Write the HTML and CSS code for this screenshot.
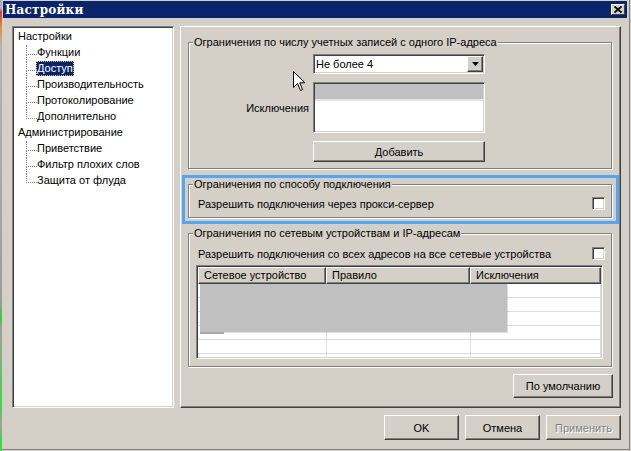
FILE: index.html
```html
<!DOCTYPE html>
<html lang="ru">

<head>
    <meta charset="UTF-8">
    <meta name="viewport" content="width=device-width, initial-scale=1.0">
    <title>Настройки</title>
    <link rel="stylesheet" href="styles.css">
</head>

<body>
    <div class="window">
        <div class="title-bar">
            <span class="title">Настройки</span>
            <span class="close-btn">
                <svg width="8" height="7" viewBox="0 0 8 7">
                    <path d="M0.5 0.5 L7.5 6.5 M7.5 0.5 L0.5 6.5" stroke="#000" stroke-width="1.8" />
                </svg>
            </span>
        </div>
        <div class="dlg-body">
            <div class="dlg-content">
                <div class="tree">
                    <ul class="tree-root">
                        <li>
                            <span class="node">Настройки</span>
                            <ul class="tree-children">
                                <li><span class="node">Функции</span></li>
                                <li><span class="node selected">Доступ</span></li>
                                <li><span class="node">Производительность</span></li>
                                <li><span class="node">Протоколирование</span></li>
                                <li><span class="node">Дополнительно</span></li>
                            </ul>
                        </li>
                        <li>
                            <span class="node">Администрирование</span>
                            <ul class="tree-children">
                                <li><span class="node">Приветствие</span></li>
                                <li><span class="node">Фильтр плохих слов</span></li>
                                <li><span class="node">Защита от флуда</span></li>
                            </ul>
                        </li>
                    </ul>
                </div>
                <div class="panel">
                    <fieldset class="group group-ip">
                        <legend>Ограничения по числу учетных записей с одного IP-адреса</legend>
                        <div class="ip-grid">
                            <span></span>
                            <div class="combo">
                                <span class="combo-text">Не более 4</span>
                                <span class="combo-btn">
                                    <svg width="7" height="4" viewBox="0 0 7 4">
                                        <polygon points="0,0 7,0 3.5,4" fill="#000" />
                                    </svg>
                                </span>
                            </div>
                            <span class="ip-label">Исключения</span>
                            <div class="listbox">
                                <div class="list-sel"></div>
                            </div>
                            <span></span>
                            <button class="btn btn-add">Добавить</button>
                        </div>
                        <svg class="cursor" width="13" height="21" viewBox="0 0 13 21">
                            <path d="M0.5 0.5 V16.5 L4.5 12.5 L7.5 19.5 L9.5 18.5 L6.8 11.8 H12 Z" fill="#fff" stroke="#000" stroke-width="1" />
                        </svg>
                    </fieldset>
                    <div class="highlight">
                        <fieldset class="group group-proxy">
                            <legend>Ограничения по способу подключения</legend>
                            <div class="check-row">
                                <span>Разрешить подключения через прокси-сервер</span>
                                <span class="checkbox"></span>
                            </div>
                        </fieldset>
                    </div>
                    <fieldset class="group group-net">
                        <legend>Ограничения по сетевым устройствам и IP-адресам</legend>
                        <div class="net-body">
                            <div class="check-row">
                                <span>Разрешить подключения со всех адресов на все сетевые устройства</span>
                                <span class="checkbox"></span>
                            </div>
                            <div class="listview">
                                <div class="lv-header">
                                    <div class="lv-col">Сетевое устройство</div>
                                    <div class="lv-col">Правило</div>
                                    <div class="lv-col">Исключения</div>
                                </div>
                                <div class="lv-rows">
                                    <div></div><div></div><div></div>
                                    <div></div><div></div><div></div>
                                    <div></div><div></div><div></div>
                                    <div></div><div></div><div></div>
                                    <div></div><div></div><div></div>
                                    <div></div><div></div><div></div>
                                </div>
                                <div class="lv-overlay"></div>
                            </div>
                        </div>
                    </fieldset>
                    <button class="btn btn-default">По умолчанию</button>
                </div>
            </div>
            <div class="dlg-footer">
                <button class="btn btn-footer">OK</button>
                <button class="btn btn-footer">Отмена</button>
                <button class="btn btn-footer" disabled>Применить</button>
            </div>
        </div>
    </div>
</body>

</html>
```

FILE: styles.css
```css
* {
    margin: 0;
    padding: 0;
    box-sizing: border-box;
}

ul {
    list-style: none;
}

body {
    width: 631px;
    height: 451px;
    overflow: hidden;
    font: 11px "Liberation Sans", Arial, sans-serif;
    color: #000;
    background: linear-gradient(to bottom, #a8a8a8 0, #b8b8b8 8px, #d83a2a 12px, #e8902c 28px, #b4b4b4 46px, #9c9c9c 300px, #30d040 318px, #a0a0a0 330px, #30e040 405px, #a0a0a0 425px, #30e040 440px) 0 0 / 2px 100% no-repeat, #d4d0c8;
}

.window {
    margin-left: 2px;
    width: 628px;
    height: 450px;
    padding: 1px 2px 0 1px;
    border-right: 1px solid #808080;
    border-bottom: 1px solid #808080;
    background: #d4d0c8;
}

.title-bar {
    height: 17px;
    display: flex;
    align-items: center;
    justify-content: space-between;
    padding: 0 2px;
    background: #0a246a;
    color: #fff;
}

.title {
    font: bold 12px "DejaVu Serif", "Liberation Serif", serif;
    letter-spacing: 0.2px;
}

.close-btn {
    width: 14px;
    height: 11px;
    display: flex;
    align-items: center;
    justify-content: center;
    background: #d4d0c8;
    border: 1px solid;
    border-color: #fff #404040 #404040 #fff;
}

.dlg-body {
    padding: 8px 6px 0 9px;
}

.dlg-content {
    display: flex;
    gap: 6px;
    height: 382px;
}

/* дерево слева */
.tree {
    width: 162px;
    background: #fff;
    border: 1px solid;
    border-color: #808080 #fff #fff #808080;
    box-shadow: inset 1px 1px #404040, inset -1px -1px #d4d0c8;
    padding: 1px 0 0 4px;
}

.node {
    display: block;
    width: max-content;
    height: 15px;
    line-height: 15px;
    margin-top: 1px;
    padding: 0 1px;
}

.node.selected {
    background: #0a246a;
    color: #fff;
    outline: 1px dotted #e8c060;
    outline-offset: -1px;
}

.tree-children {
    margin-left: 9px;
}

.tree-children li {
    position: relative;
    padding-left: 10px;
}

.tree-children li::before {
    content: '';
    position: absolute;
    left: 0;
    top: 0;
    width: 10px;
    height: 9px;
    border-left: 1px dotted #808080;
    border-bottom: 1px dotted #808080;
}

.tree-children li:not(:last-child)::after {
    content: '';
    position: absolute;
    left: 0;
    top: 9px;
    bottom: 0;
    border-left: 1px dotted #808080;
}

/* правая панель */
.panel {
    width: 441px;
    display: flex;
    flex-direction: column;
    padding: 9px 8px 0 7px;
    border: 1px solid;
    border-color: #fff #404040 #404040 #fff;
    box-shadow: inset -1px -1px #808080;
}

.group {
    position: relative;
    min-width: 0;
    border: 1px solid #808080;
    box-shadow: inset 1px 1px #fff, 1px 1px #fff;
}

.group legend {
    margin-left: 4px;
    padding: 0 1px;
    line-height: 13px;
    background: #d4d0c8;
}

.ip-grid {
    display: grid;
    grid-template-columns: 120px 172px;
    column-gap: 4px;
    row-gap: 8px;
    padding: 5px 0 6px 0;
}

.ip-label {
    align-self: center;
    text-align: right;
}

.combo,
.listbox {
    background: #fff;
    padding: 1px;
    border: 1px solid;
    border-color: #808080 #fff #fff #808080;
    box-shadow: inset 1px 1px #404040, inset -1px -1px #d4d0c8;
}

.combo {
    height: 20px;
    display: flex;
    align-items: center;
}

.combo-text {
    padding-left: 1px;
}

.combo-btn {
    margin-left: auto;
    width: 16px;
    height: 16px;
    display: flex;
    align-items: center;
    justify-content: center;
    background: #d4d0c8;
    border: 1px solid;
    border-color: #fff #404040 #404040 #fff;
    box-shadow: inset -1px -1px #808080;
}

.listbox {
    height: 51px;
}

.list-sel {
    height: 17px;
    background: #c0c0c0;
    border-bottom: 2px solid #e4e4e4;
}

.btn {
    font: 11px "Liberation Sans", Arial, sans-serif;
    color: #000;
    background: #d4d0c8;
    border: 1px solid;
    border-color: #fff #404040 #404040 #fff;
    box-shadow: inset -1px -1px #808080;
    outline: none;
}

.btn:disabled {
    color: #808080;
    text-shadow: 1px 1px #fff;
}

.btn-add {
    height: 21px;
}

.cursor {
    position: absolute;
    left: 104px;
    top: 22px;
}

.highlight {
    margin: 6px -7px 0 -6px;
    padding: 0 4px 3px 3px;
    border: 3px solid #55a5f5;
}

.check-row {
    display: flex;
    align-items: center;
    justify-content: space-between;
    height: 13px;
}

.group-proxy .check-row {
    margin: 6px 6px 7px 9px;
}

.group-net {
    margin-top: 3px;
}

.net-body {
    padding: 7px 8px 7px 7px;
}

.net-body .check-row {
    margin: 0 -2px 0 2px;
}

.checkbox {
    width: 13px;
    height: 13px;
    background: #fff;
    border: 1px solid;
    border-color: #808080 #fff #fff #808080;
    box-shadow: inset 1px 1px #404040, inset -1px -1px #d4d0c8;
}

/* таблица */
.listview {
    position: relative;
    margin-top: 5px;
    height: 94px;
    overflow: hidden;
    background: #fff;
    padding: 1px;
    border: 1px solid;
    border-color: #808080 #fff #fff #808080;
    box-shadow: inset 1px 1px #404040, inset -1px -1px #d4d0c8;
}

.lv-header {
    display: grid;
    grid-template-columns: 128px 144px 1fr;
    height: 17px;
}

.lv-col {
    padding-left: 5px;
    line-height: 15px;
    background: #d4d0c8;
    border: 1px solid;
    border-color: #fff #404040 #404040 #fff;
    box-shadow: inset -1px -1px #808080;
}

.lv-rows {
    display: grid;
    grid-template-columns: 129px 144px 1fr;
    grid-auto-rows: 14px;
}

.lv-rows div {
    border-right: 1px solid #dcdcdc;
    border-bottom: 1px solid #dcdcdc;
}

.lv-overlay {
    position: absolute;
    left: 3px;
    top: 18px;
    width: 307px;
    height: 48px;
    background: #c0c0c0;
    box-shadow: 1px 1px 1px rgba(0, 0, 0, 0.12);
}

.lv-overlay::after {
    content: '';
    position: absolute;
    left: 0;
    bottom: -2px;
    width: 24px;
    height: 2px;
    background: #a8a8a8;
}

.btn-default {
    align-self: flex-end;
    margin-top: 7px;
    margin-right: -1px;
    width: 100px;
    height: 24px;
}

.dlg-footer {
    display: flex;
    justify-content: flex-end;
    gap: 6px;
    margin-top: 7px;
}

.btn-footer {
    width: 75px;
    height: 25px;
}
```
